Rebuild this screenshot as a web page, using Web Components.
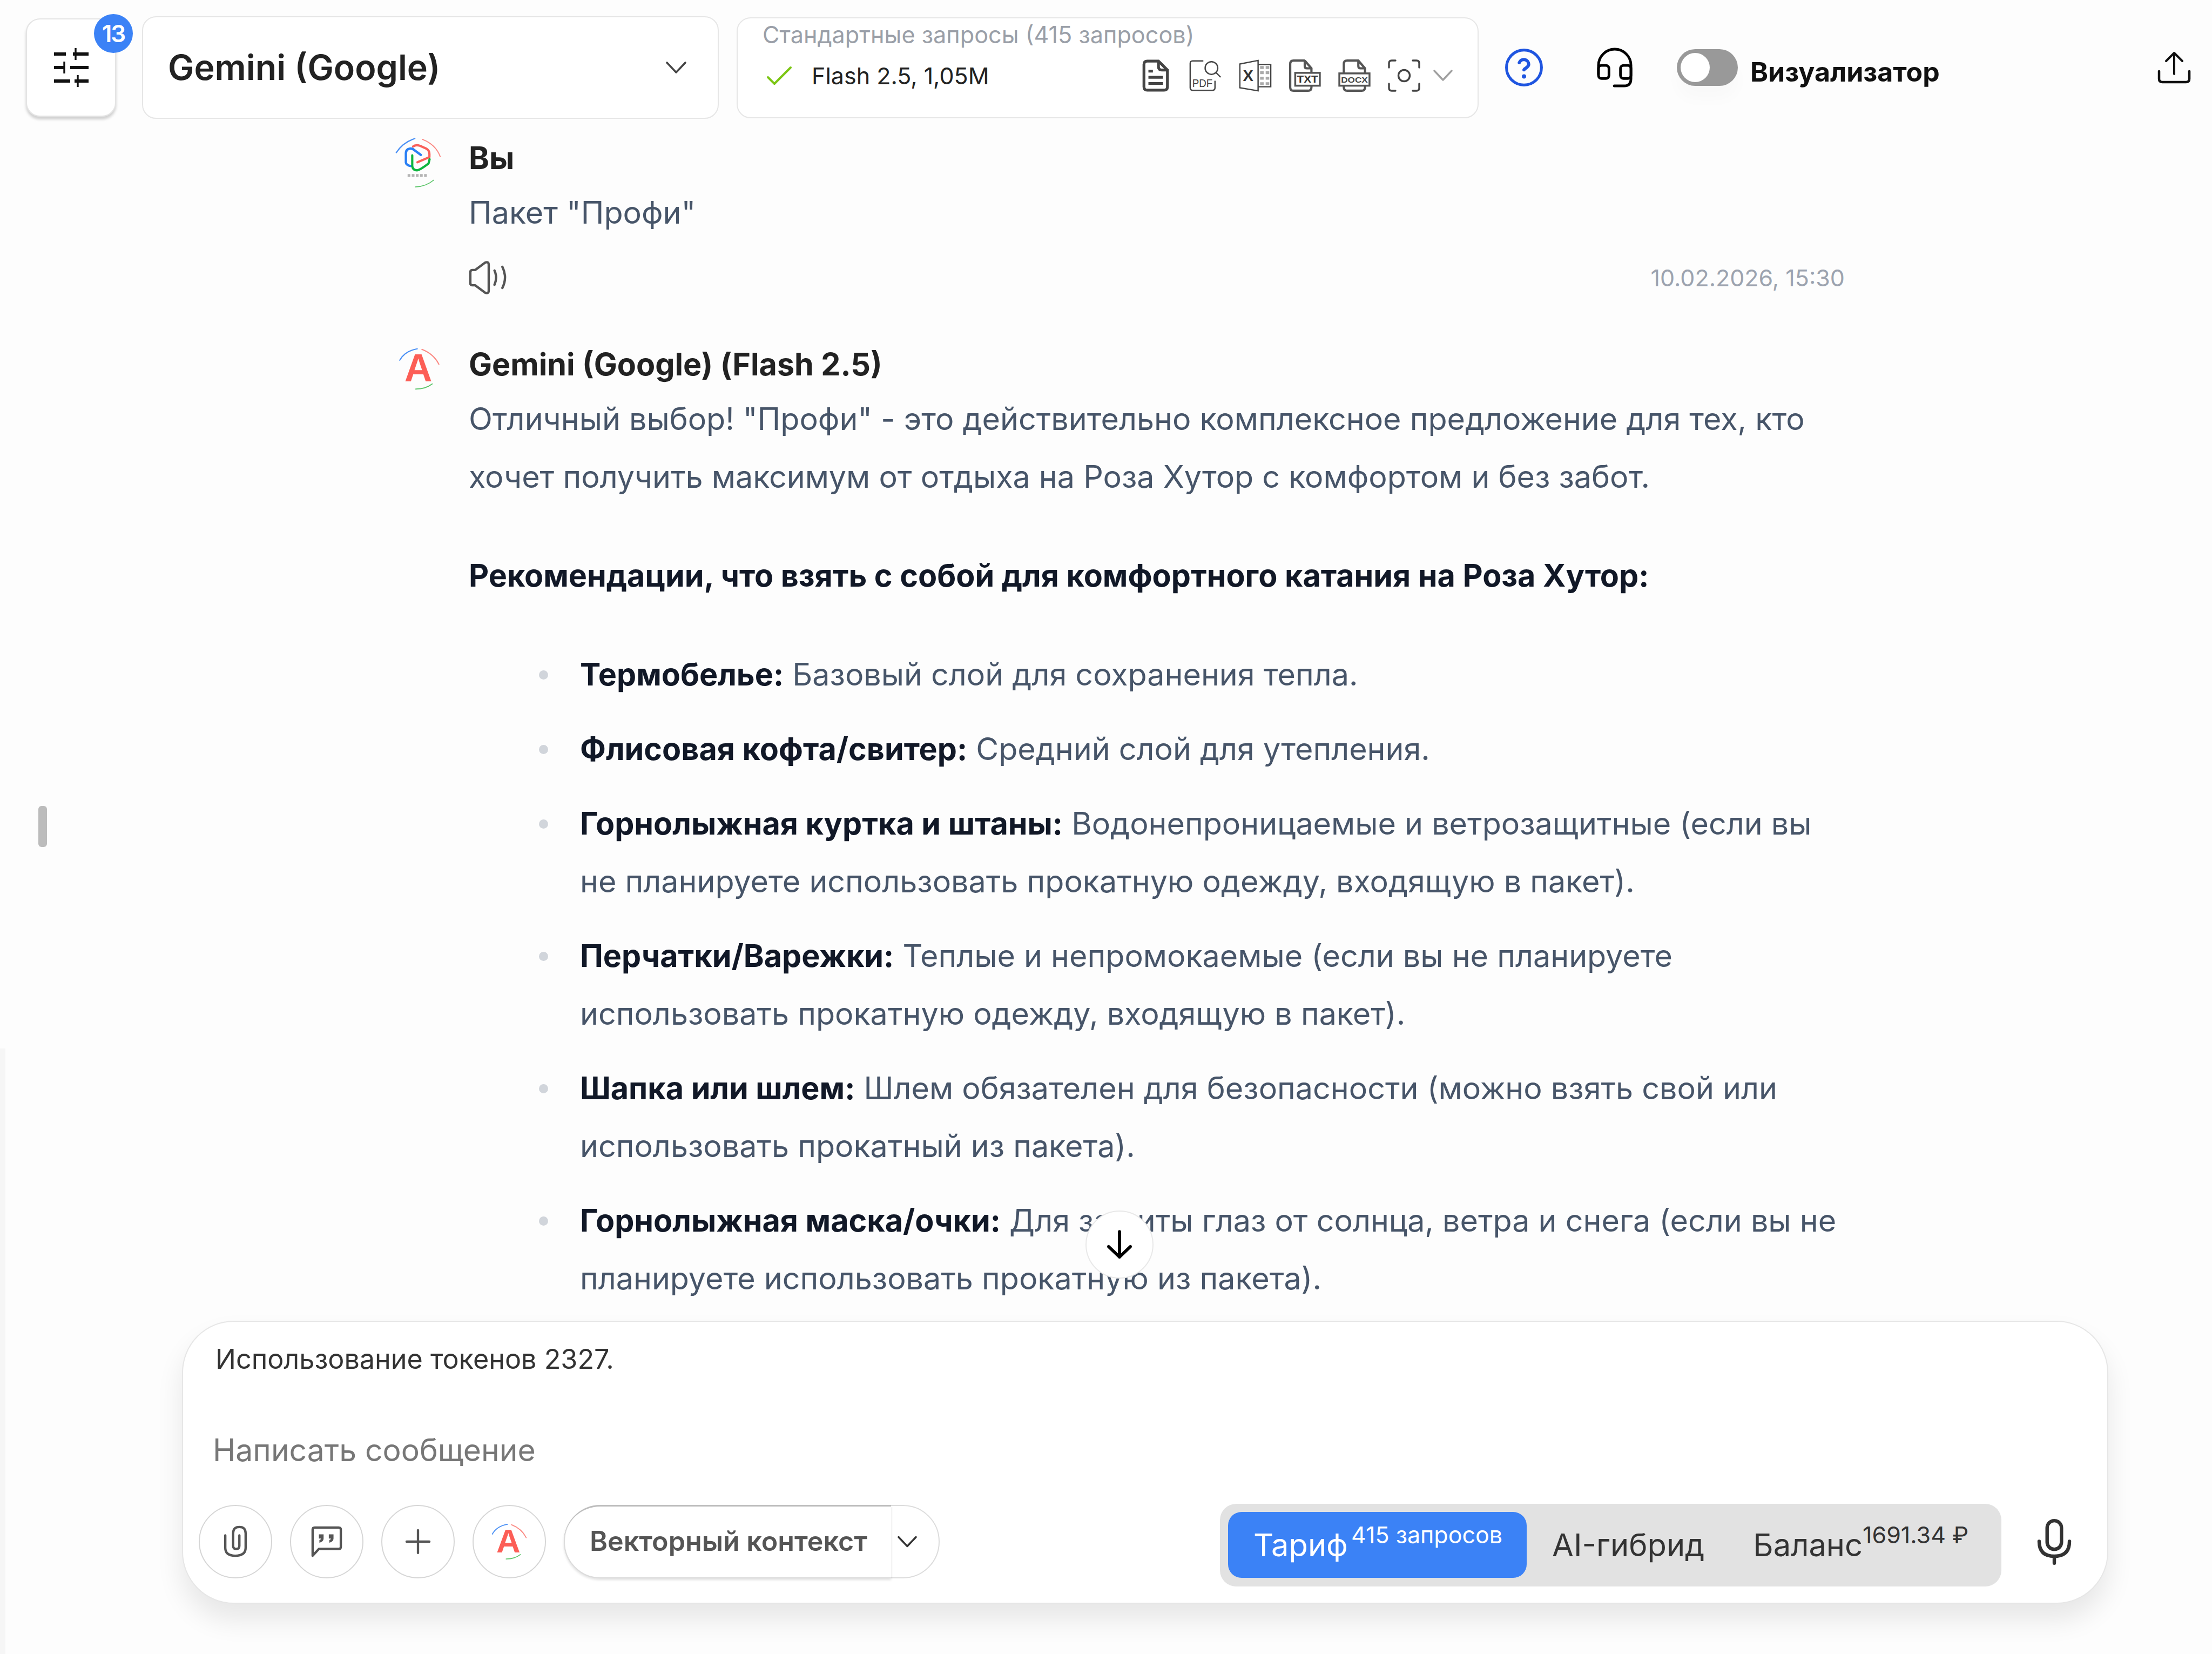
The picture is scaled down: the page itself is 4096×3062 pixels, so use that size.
<!DOCTYPE html>
<html lang="ru">
<head>
<meta charset="utf-8">
<title>Чат</title>
<style>
  html, body { margin: 0; padding: 0; background: #fdfdfd; }
  body { font-family: Inter, "Noto Sans", sans-serif; }
</style>
</head>
<body>
<app-shell>
  <top-bar slot="bar"></top-bar>
  <chat-list slot="chat">
    <chat-message name="Вы" avatar="logo" time="10.02.2026, 15:30">
      <msg-text>Пакет "Профи"</msg-text>
    </chat-message>
    <chat-message name="Gemini (Google) (Flash 2.5)" avatar="letter">
      <msg-text>Отличный выбор! "Профи" - это действительно комплексное предложение для тех, кто хочет получить максимум от отдыха на Роза Хутор с комфортом и без забот.</msg-text>
      <msg-text heading>Рекомендации, что взять с собой для комфортного катания на Роза Хутор:</msg-text>
      <msg-item lead="Термобелье:">Базовый слой для сохранения тепла.</msg-item>
      <msg-item lead="Флисовая кофта/свитер:">Средний слой для утепления.</msg-item>
      <msg-item lead="Горнолыжная куртка и штаны:">Водонепроницаемые и ветрозащитные (если вы не планируете использовать прокатную одежду, входящую в пакет).</msg-item>
      <msg-item lead="Перчатки/Варежки:">Теплые и непромокаемые (если вы не планируете использовать прокатную одежду, входящую в пакет).</msg-item>
      <msg-item lead="Шапка или шлем:">Шлем обязателен для безопасности (можно взять свой или использовать прокатный из пакета).</msg-item>
      <msg-item lead="Горнолыжная маска/очки:">Для защиты глаз от солнца, ветра и снега (если вы не планируете использовать прокатную из пакета).</msg-item>
    </chat-message>
  </chat-list>
  <composer-box slot="composer"></composer-box>
</app-shell>

<script>
const ICONS = {
  sliders: `<svg viewBox="0 0 64 72" fill="none" stroke="#111" stroke-width="6"><path d="M0 11H22M35 11H64M0 36H18M30 36H64M0 61H30M38 61H64"/><path stroke-width="3.4" d="M40 0V22M19 25V47M44 50V72"/></svg>`,
  chevron: `<svg viewBox="0 0 38 22" fill="none" stroke="currentColor" stroke-width="3.6" stroke-linecap="round" stroke-linejoin="round"><path d="M2 2L19 20L36 2"/></svg>`,
  check: `<svg viewBox="0 0 46 34" fill="none" stroke="#7cc614" stroke-width="4" stroke-linecap="round" stroke-linejoin="round"><path d="M2 20L14 32L44 2"/></svg>`,
  doc: `<svg viewBox="0 0 48 58" fill="none" stroke="#444" stroke-width="5"><path d="M29 3H9Q3 3 3 9V49Q3 55 9 55H39Q45 55 45 49V19Z"/><path d="M29 3V13Q29 19 35 19H45"/><path stroke-width="5" d="M11 21H19M11 32H37M11 43H37"/></svg>`,
  pdf: `<svg viewBox="0 0 64 62" fill="none" stroke="#444" stroke-width="2.6"><path d="M28 2H7Q2 2 2 7V55Q2 60 7 60H46Q51 60 51 55V41"/><circle cx="44" cy="16" r="12.5"/><path d="M53 25L62 34"/><text x="6" y="53" fill="#444" stroke="none" font-family="'Liberation Sans',sans-serif" font-size="21" textLength="40" lengthAdjust="spacingAndGlyphs">PDF</text></svg>`,
  xls: `<svg viewBox="0 0 64 62" fill="none" stroke="#444" stroke-width="2.6"><path d="M2 8L38 1V61L2 55Z"/><path d="M38 9H63V53H38"/><text x="8" y="42" fill="#333" stroke="none" font-family="'Liberation Sans',sans-serif" font-weight="700" font-size="31">X</text><path stroke="#aaa" stroke-width="6" d="M42 15H49M53 15H60M42 25H49M53 25H60M42 36H49M53 36H60M42 47H49M53 47H60"/></svg>`,
  txt: `<svg viewBox="0 0 56 58" fill="none" stroke="#555" stroke-width="4"><path d="M28 2H8Q2 2 2 8V50Q2 56 8 56H34Q40 56 40 50V25M28 2L40 16V25M28 2V12Q28 16 32 16H40"/><rect x="11" y="24" width="44" height="23" fill="#fff" stroke-width="3.4"/><text x="14" y="42" fill="#333" stroke="none" font-family="'Liberation Sans',sans-serif" font-weight="700" font-size="17" textLength="38" lengthAdjust="spacingAndGlyphs">TXT</text></svg>`,
  docx: `<svg viewBox="0 0 58 58" fill="none" stroke="#555" stroke-width="4"><path d="M36 2H16Q10 2 10 8V50Q10 56 16 56H42Q48 56 48 50V16ZM36 2V12Q36 16 40 16H48"/><rect x="2" y="25" width="54" height="22" fill="#fff" stroke-width="3.4"/><text x="5" y="42" fill="#444" stroke="none" font-family="'Liberation Sans',sans-serif" font-weight="700" font-size="15" textLength="48" lengthAdjust="spacingAndGlyphs">DOCX</text></svg>`,
  scan: `<svg viewBox="0 0 60 60" fill="none" stroke="#444" stroke-width="3.4" stroke-linecap="round"><path d="M14 2H7Q2 2 2 7V15M46 2H53Q58 2 58 7V15M14 58H7Q2 58 2 53V45M46 58H53Q58 58 58 53V45"/><circle cx="30" cy="30" r="10.5"/></svg>`,
  help: `<svg viewBox="0 0 24 24" fill="none" stroke="#1f55e0" stroke-width="1.7" stroke-linecap="round" stroke-linejoin="round"><circle cx="12" cy="12" r="10.8"/><path stroke-width="2" d="M9.1 9a3 3 0 0 1 5.8 1c0 2-2.9 2.6-2.9 3.4"/><path stroke-width="2.6" d="M12 17.5h.01"/></svg>`,
  headset: `<svg viewBox="0 0 68 74" fill="none" stroke="#000" stroke-width="5" stroke-linecap="round" stroke-linejoin="round"><path d="M3 50V33A31 31 0 0 1 65 33V58Q65 72 52 72H33"/><rect x="3" y="33" width="20" height="25" rx="6"/><rect x="45" y="33" width="20" height="25" rx="6"/></svg>`,
  upload: `<svg viewBox="0 0 60 60" fill="none" stroke="#111" stroke-width="4" stroke-linecap="round" stroke-linejoin="round"><path d="M30 42V3M15 18L30 3L45 18"/><path stroke-width="4.5" d="M2 37V51Q2 57 8 57H52Q58 57 58 51V37"/></svg>`,
  speaker: `<svg viewBox="0 0 74 63" fill="none" stroke="#555" stroke-width="4.5" stroke-linecap="round" stroke-linejoin="round"><path d="M3 21Q3 17 7 17H12L31 3Q38 0 38 7V56Q38 63 31 60L12 46H7Q3 46 3 42Z"/><path d="M49 18Q55 31 49 45M64 11Q74 31 64 51"/></svg>`,
  logo: `<svg viewBox="40 40 280 300" fill="none" stroke-linecap="round" stroke-linejoin="round"><path stroke="#4a90f5" stroke-width="7" d="M52 132Q90 72 160 50"/><path stroke="#fb8a84" stroke-width="6" d="M205 55Q282 85 308 155"/><path stroke="#5cc56a" stroke-width="5" d="M162 332Q225 330 270 292"/><path stroke="#2a80f5" stroke-width="14" d="M195 145L150 112Q136 104 120 112Q108 120 108 134V190Q110 205 135 210"/><path stroke="#f9605a" stroke-width="13" d="M150 96Q165 84 190 92L225 108Q245 118 245 140V158L175 188"/><path stroke="#0eb53f" stroke-width="13" d="M145 148V212Q150 236 175 235Q195 230 240 195L246 170"/><path stroke="#b5b5b5" stroke-width="16" stroke-dasharray="16 8" stroke-linecap="butt" d="M118 265H235"/></svg>`,
  letter: `<svg viewBox="0 0 80 86" fill="none" stroke-linecap="round"><path stroke="#4a90f5" stroke-width="2.2" d="M2 26Q12 8 36 4"/><path stroke="#fb8a84" stroke-width="2.2" d="M45 5Q68 14 78 34"/><path stroke="#5cc56a" stroke-width="2" d="M33 82Q52 82 65 72"/><text x="38" y="67" text-anchor="middle" fill="#fc5e56" font-family="'Liberation Sans',sans-serif" font-weight="700" font-size="75">A</text></svg>`,
  clip: `<svg viewBox="0 0 45 60" fill="none" stroke="#555" stroke-width="4.5" stroke-linecap="round"><path d="M3 18V42Q3 57 22 57Q42 57 42 42V14Q42 2 30 2Q18 2 18 14V38Q18 44 24 44Q30 44 30 38V18"/></svg>`,
  quote: `<svg viewBox="0 0 60 60" fill="none" stroke="#555" stroke-width="4.5" stroke-linejoin="round"><path d="M3 57V7Q3 3 7 3H53Q57 3 57 7V40Q57 44 53 44H15Z"/><path fill="#555" stroke="none" d="M15 16H24V24Q24 30 16 32V27Q19 26 19 24H15ZM34 16H43V24Q43 30 35 32V27Q38 26 38 24H34Z"/></svg>`,
  plus: `<svg viewBox="0 0 48 48" fill="none" stroke="#555" stroke-width="4.5" stroke-linecap="round"><path d="M24 2V46M2 24H46"/></svg>`,
  mic: `<svg viewBox="0 0 63 85" fill="none" stroke="#333" stroke-width="6.5" stroke-linecap="round"><rect x="18" y="3" width="27" height="54" rx="13.5"/><path d="M3 42Q3 70 31.5 70Q60 70 60 42M31.5 70V83"/></svg>`,
  arrow: `<svg viewBox="0 0 48 56" fill="none" stroke="#000" stroke-width="6" stroke-linecap="round" stroke-linejoin="round"><path d="M24 3V52M3 32L24 52L45 32"/></svg>`
};

// draws one icon of the set above, size comes from :host width/height set by the user
class AppIcon extends HTMLElement {
  connectedCallback() {
    if (!this.shadowRoot) this.attachShadow({ mode: 'open' });
    this.shadowRoot.innerHTML = `
      <style>
        :host { display: inline-block; line-height: 0; flex: none; }
        svg { width: 100%; height: 100%; display: block; overflow: visible; }
      </style>
      ${ICONS[this.getAttribute('name')] || ''}
    `;
  }
}

class AppShell extends HTMLElement {
  constructor() {
    super();
    this.attachShadow({ mode: 'open' });
    this.shadowRoot.innerHTML = `
      <style>
        :host {
          display: flex;
          flex-direction: column;
          position: relative;
          width: 4096px;
          height: 3062px;
          overflow: hidden;
          background: #fdfdfd;
        }
        .thumb {
          position: absolute;
          left: 71px;
          top: 1492px;
          width: 16px;
          height: 76px;
          border-radius: 6px;
          background: #bcbcbc;
        }
        .edge {
          position: absolute;
          left: 0;
          top: 1941px;
          bottom: 0;
          width: 10px;
          background: #f6f6f6;
        }
      </style>
      <slot name="bar"></slot>
      <slot name="chat"></slot>
      <slot name="composer"></slot>
      <div class="thumb"></div>
      <div class="edge"></div>
    `;
  }
}

class TopBar extends HTMLElement {
  constructor() {
    super();
    this.attachShadow({ mode: 'open' });
    this.shadowRoot.innerHTML = `
      <style>
        :host {
          display: flex;
          align-items: center;
          box-sizing: border-box;
          height: 240px;
          padding: 10px 40px 0 48px;
          color: #111;
        }
        .settings {
          position: relative;
          box-sizing: border-box;
          width: 167px;
          height: 182px;
          border: 2px solid #e4e4e4;
          border-radius: 26px;
          background: #fff;
          box-shadow: 0 5px 5px rgba(0,0,0,.18);
          display: flex;
          align-items: center;
          justify-content: center;
          margin-right: 48px;
        }
        .settings app-icon { width: 64px; height: 72px; }
        .badge {
          position: absolute;
          left: 124px;
          top: -10px;
          width: 72px;
          height: 72px;
          border-radius: 50%;
          background: #3b82f6;
          color: #fff;
          font: 600 44px/72px Inter, sans-serif;
          letter-spacing: -2px;
          text-align: center;
        }
        .select {
          box-sizing: border-box;
          width: 1068px;
          height: 190px;
          border: 2px solid #e6e6e6;
          border-radius: 26px;
          background: #fff;
          display: flex;
          align-items: center;
          justify-content: space-between;
          padding: 0 58px 0 46px;
          margin-right: 33px;
          font: 600 64.6px/1 Inter, sans-serif;
          color: #222;
        }
        .select app-icon { width: 38px; height: 22px; color: #444; }
        model-box { margin-right: 48px; }
        .help { width: 72px; height: 72px; margin-right: 99px; }
        .headset { width: 66px; height: 72px; margin-right: 82px; }
        .toggle {
          box-sizing: border-box;
          width: 113px;
          height: 68px;
          padding: 7px;
          border-radius: 34px;
          background: #999;
          box-shadow: 0 24px 30px rgba(0,0,0,.02);
          margin-right: 23px;
        }
        .toggle i { display: block; width: 54px; height: 54px; border-radius: 50%; background: #fff; }
        .label { font: 700 50px/1 Inter, sans-serif; color: #111; margin-top: 16px; }
        .upload { width: 60px; height: 60px; margin-left: auto; }
      </style>
      <div class="settings">
        <app-icon name="sliders"></app-icon>
        <div class="badge">13</div>
      </div>
      <div class="select">
        <span>Gemini (Google)</span>
        <app-icon name="chevron"></app-icon>
      </div>
      <model-box></model-box>
      <app-icon class="help" name="help"></app-icon>
      <app-icon class="headset" name="headset"></app-icon>
      <div class="toggle"><i></i></div>
      <span class="label">Визуализатор</span>
      <app-icon class="upload" name="upload"></app-icon>
    `;
  }
}

class ModelBox extends HTMLElement {
  constructor() {
    super();
    this.attachShadow({ mode: 'open' });
    this.shadowRoot.innerHTML = `
      <style>
        :host {
          display: flex;
          flex-direction: column;
          box-sizing: border-box;
          width: 1374px;
          height: 187px;
          border: 2px solid #e6e6e6;
          border-radius: 26px;
          background: #fff;
          padding: 3px 46px 0 46px;
          flex: none;
        }
        .title { font: 400 43.2px/54px Inter, sans-serif; color: #9a9fa8; }
        .row { display: flex; align-items: center; height: 60px; margin-top: 19px; }
        .check { width: 46px; height: 34px; margin: 0 37px 0 8px; }
        .name { font: 400 43px/60px Inter, sans-serif; color: #222; }
        .tools { display: flex; align-items: center; gap: 32px; margin-left: auto; }
        .tools app-icon { width: 60px; height: 60px; }
        .tools .more { width: 36px; height: 21px; color: #a0a0a0; margin-left: -8px; }
      </style>
      <div class="title">Стандартные запросы (415 запросов)</div>
      <div class="row">
        <app-icon class="check" name="check"></app-icon>
        <span class="name">Flash 2.5, 1,05M</span>
        <div class="tools">
          <app-icon name="doc"></app-icon>
          <app-icon name="pdf"></app-icon>
          <app-icon name="xls"></app-icon>
          <app-icon name="txt"></app-icon>
          <app-icon name="docx"></app-icon>
          <app-icon name="scan"></app-icon>
          <app-icon class="more" name="chevron"></app-icon>
        </div>
      </div>
    `;
  }
}

class ChatList extends HTMLElement {
  constructor() {
    super();
    this.attachShadow({ mode: 'open' });
    this.shadowRoot.innerHTML = `
      <style>
        :host {
          display: block;
          position: relative;
          box-sizing: border-box;
          height: 2205px;
          padding: 4.5px 0 0 730px;
          flex: none;
        }
        .down {
          position: absolute;
          left: 2010px;
          top: 2001px;
          box-sizing: border-box;
          width: 126px;
          height: 126px;
          border-radius: 50%;
          border: 2px solid #e8e8e8;
          background: #fff;
          display: flex;
          align-items: center;
          justify-content: center;
        }
        .down app-icon { width: 46px; height: 54px; }
      </style>
      <slot></slot>
      <div class="down"><app-icon name="arrow"></app-icon></div>
    `;
  }
}

class ChatMessage extends HTMLElement {
  constructor() {
    super();
    this.attachShadow({ mode: 'open' });
  }

  connectedCallback() {
    const avatar = this.getAttribute('avatar');
    const time = this.getAttribute('time');
    this.shadowRoot.innerHTML = `
      <style>
        :host {
          display: grid;
          grid-template-columns: 138px 2548px;
          font: 400 57.4px/107px Inter, sans-serif;
          color: #475569;
        }
        .avatar { padding-top: 8px; }
        .avatar app-icon[name="logo"] { width: 89px; height: 96px; }
        .avatar app-icon[name="letter"] { width: 77px; height: 82px; margin: 7px 0 0 8px; }
        .name { font-weight: 700; line-height: 95px; color: #222; }
        .foot {
          display: flex;
          align-items: center;
          justify-content: space-between;
          height: 74px;
          margin: 30px 0 76px;
        }
        .foot app-icon { width: 72px; height: 62px; }
        .time { font-size: 43px; line-height: 60px; color: #9ca3af; }
      </style>
      <div class="avatar"><app-icon name="${avatar}"></app-icon></div>
      <div>
        <div class="name">${this.getAttribute('name')}</div>
        <slot></slot>
        ${time ? `<div class="foot"><app-icon name="speaker"></app-icon><span class="time">${time}</span></div>` : ''}
      </div>
    `;
  }
}

class MsgText extends HTMLElement {
  constructor() {
    super();
    this.attachShadow({ mode: 'open' });
    this.shadowRoot.innerHTML = `
      <style>
        :host { display: block; }
        :host([heading]) { font-weight: 700; color: #111827; margin: 76px 0; }
      </style>
      <slot></slot>
    `;
  }
}

class MsgItem extends HTMLElement {
  constructor() {
    super();
    this.attachShadow({ mode: 'open' });
  }

  connectedCallback() {
    this.shadowRoot.innerHTML = `
      <style>
        :host {
          display: block;
          position: relative;
          padding-left: 206px;
          margin-bottom: 31px;
        }
        .dot {
          position: absolute;
          left: 130px;
          top: 46px;
          width: 17px;
          height: 17px;
          border-radius: 50%;
          background: #d1d5db;
        }
        b { font-weight: 700; color: #111827; }
      </style>
      <span class="dot"></span><b>${this.getAttribute('lead')}</b> <slot></slot>
    `;
  }
}

class RoundButton extends HTMLElement {
  constructor() {
    super();
    this.attachShadow({ mode: 'open' });
    this.shadowRoot.innerHTML = `
      <style>
        :host {
          display: flex;
          align-items: center;
          justify-content: center;
          box-sizing: border-box;
          width: 136px;
          height: 136px;
          border: 2px solid #d6d6d6;
          border-radius: 50%;
          flex: none;
        }
      </style>
      <slot></slot>
    `;
  }
}

class TariffSwitch extends HTMLElement {
  constructor() {
    super();
    this.attachShadow({ mode: 'open' });
    this.shadowRoot.innerHTML = `
      <style>
        :host {
          display: flex;
          align-items: flex-start;
          box-sizing: border-box;
          width: 1447px;
          height: 153px;
          padding: 15px 15px;
          border-radius: 30px;
          background: #e2e2e2;
          margin: -2px 0 0 auto;
          font: 400 57.8px/122px Inter, sans-serif;
          color: #333;
        }
        .tab { display: flex; height: 122px; white-space: nowrap; }
        .tab span { font-size: 43px; line-height: 84px; }
        .active {
          box-sizing: border-box;
          width: 553px;
          padding-left: 47px;
          border-radius: 25px;
          background: #3b82f6;
          color: #fff;
        }
        .active span { margin-left: 6px; }
        .ai { margin-left: 47px; }
        .bal { margin-left: 90px; }
      </style>
      <div class="tab active">Тариф<span>415 запросов</span></div>
      <div class="tab ai">AI-гибрид</div>
      <div class="tab bal">Баланс<span>1691.34 ₽</span></div>
    `;
  }
}

class ComposerBox extends HTMLElement {
  constructor() {
    super();
    this.attachShadow({ mode: 'open' });
    this.shadowRoot.innerHTML = `
      <style>
        :host {
          display: block;
          box-sizing: border-box;
          width: 3567px;
          height: 524px;
          margin-left: 337px;
          padding: 38px 31px 0 29px;
          border: 2px solid #e6e6e6;
          border-radius: 96px;
          background: #fff;
          box-shadow: 0 30px 50px rgba(0,0,0,.09);
          flex: none;
        }
        .usage { padding-left: 31px; font: 400 50.3px/62px Inter, sans-serif; color: #333; }
        .place { padding-left: 26px; margin-top: 103px; font: 400 57px/70px Inter, sans-serif; color: #777; }
        .tools { display: flex; align-items: flex-start; gap: 33px; margin-top: 66px; }
        round-button app-icon { width: 44px; height: 58px; }
        round-button app-icon[name="quote"] { width: 58px; height: 58px; }
        round-button app-icon[name="plus"] { width: 46px; height: 46px; }
        round-button app-icon[name="letter"] { width: 66px; height: 72px; }
        .pill {
          display: flex;
          box-sizing: border-box;
          width: 696px;
          height: 136px;
          border-radius: 68px;
          border: 2px solid #dcdcdc;
          flex: none;
        }
        .pill .main {
          box-sizing: border-box;
          width: 606px;
          height: 136px;
          margin: -2px 0 0 -2px;
          padding-left: 48px;
          border-radius: 68px 0 0 68px;
          border-top: 3px solid #bdbdbd;
          box-shadow: 0 3px 4px rgba(0,0,0,.12);
          font: 600 50.2px/128px Inter, sans-serif;
          color: #555;
          white-space: nowrap;
        }
        .pill .open { flex: 1; display: flex; align-items: center; padding-left: 12px; }
        .pill .open app-icon { width: 36px; height: 22px; color: #333; }
        .mic { width: 62px; height: 84px; margin: 26px 36px 0 34px; }
      </style>
      <div class="usage">Использование токенов 2327.</div>
      <div class="place">Написать сообщение</div>
      <div class="tools">
        <round-button><app-icon name="clip"></app-icon></round-button>
        <round-button><app-icon name="quote"></app-icon></round-button>
        <round-button><app-icon name="plus"></app-icon></round-button>
        <round-button><app-icon name="letter"></app-icon></round-button>
        <div class="pill">
          <div class="main">Векторный контекст</div>
          <div class="open"><app-icon name="chevron"></app-icon></div>
        </div>
        <tariff-switch></tariff-switch>
        <app-icon class="mic" name="mic"></app-icon>
      </div>
    `;
  }
}

customElements.define('app-icon', AppIcon);
customElements.define('app-shell', AppShell);
customElements.define('top-bar', TopBar);
customElements.define('model-box', ModelBox);
customElements.define('chat-list', ChatList);
customElements.define('chat-message', ChatMessage);
customElements.define('msg-text', MsgText);
customElements.define('msg-item', MsgItem);
customElements.define('round-button', RoundButton);
customElements.define('tariff-switch', TariffSwitch);
customElements.define('composer-box', ComposerBox);
</script>
</body>
</html>
